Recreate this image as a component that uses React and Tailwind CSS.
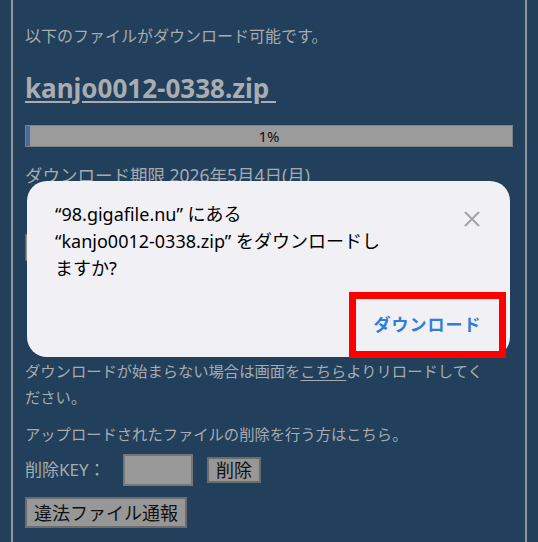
import React from "react";

const jp = { fontFamily: '"Noto Sans", "Noto Sans CJK JP", sans-serif' };

export default function App() {
  return (
    <div className="relative w-[538px] h-[542px] overflow-hidden bg-[#22405b]" style={jp}>
      {/* page panel */}
      <div className="ml-[11px] w-[516px] h-full border-x-2 border-[#8f959b] pl-[12px] pr-[11px] pt-[23px] text-[15.3px] leading-[26px] text-[#a6abb1]">
        <p className="text-[16px]">以下のファイルがダウンロード可能です。</p>
        <p className="mt-[22px] text-[26px] leading-[34px] font-bold underline underline-offset-[3px] text-[#a9adb2]">
          kanjo0012-0338.zip&nbsp;
        </p>
        {/* progress */}
        <div className="relative mt-[20px] h-[22px] w-[488px] bg-[#9b9b9b] border border-[#7c8085]">
          <div className="absolute left-0 top-0 h-full w-[4px] bg-[#4a6aa0]"></div>
          <div className="flex h-full items-center justify-center text-[15px] text-[#111]">1%</div>
        </div>
        <p className="mt-[15px] text-[17.5px]">ダウンロード期限 2026年5月4日(月)</p>
        <button className="mt-[46px] h-[27px] px-3 bg-[#8e8e8e] border border-[#666] text-[#111] text-[15px]">ダウンロード開始</button>
        <p className="mt-[43px] h-[54px]">&nbsp;</p>
        <p className="w-[470px]">
          ダウンロードが始まらない場合は画面を<span className="underline underline-offset-[3px]">こちら</span>よりリロードしてください。
        </p>
        <p className="mt-[11px]">アップロードされたファイルの削除を行う方はこちら。</p>
        <div className="mt-[7px] flex h-[32px] items-center text-[17px]">
          <span className="w-[98px]">削除KEY：</span>
          <div className="h-[32px] w-[70px] bg-[#999] border-2 border-[#777]"></div>
          <button className="ml-[14px] h-[26px] w-[54px] bg-[#979797] border-2 border-[#6c6c6c] text-[18px] leading-none text-[#111]">削除</button>
        </div>
        <button className="mt-[11px] h-[31px] w-[162px] bg-[#979797] border-2 border-[#6c6c6c] text-[18px] leading-none text-[#111]">違法ファイル通報</button>
      </div>

      {/* download prompt */}
      <div className="absolute left-[27px] top-[181px] w-[483px] h-[176px] rounded-[20px] bg-[#f0f0f5] pl-[28px] pt-[20px] text-[18px] leading-[27px] text-black">
        <p className="whitespace-nowrap">“98.gigafile.nu” にある</p>
        <p className="whitespace-nowrap">“kanjo0012-0338.zip” をダウンロードし</p>
        <p className="whitespace-nowrap">ますか?</p>
        <svg className="absolute left-[437px] top-[30px]" width="16" height="16" viewBox="0 0 16 16">
          <path d="M1.5 1.5 L14.5 14.5 M14.5 1.5 L1.5 14.5" stroke="#a3a3a8" strokeWidth="2" strokeLinecap="round" />
        </svg>
      </div>
      {/* highlight box */}
      <div className="absolute left-[349px] top-[292px] w-[157px] h-[66px] border-[7px] border-[#ff0000] flex items-center justify-center">
        <span className="text-[17px] font-semibold text-[#2f7ce0] tracking-[1px]">ダウンロード</span>
      </div>
    </div>
  );
}
